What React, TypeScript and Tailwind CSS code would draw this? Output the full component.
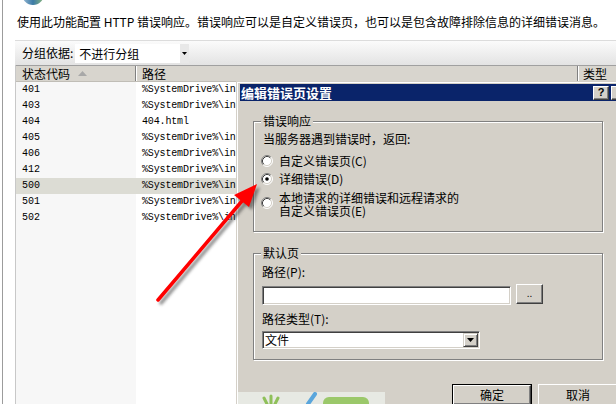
import React from 'react';

// only the part of each path left of the dialog is visible in the window
const sys = '%SystemDrive%\\in';
const rows = [
  { code: '401', path: sys },
  { code: '403', path: sys },
  { code: '404', path: '404.html' },
  { code: '405', path: sys },
  { code: '406', path: sys },
  { code: '412', path: sys },
  { code: '500', path: sys, selected: true },
  { code: '501', path: sys },
  { code: '502', path: sys },
];

const Radio = ({ checked }: { checked?: boolean }) => (
  <svg width="12" height="12" viewBox="0 0 12 12" className="shrink-0">
    <circle cx="6" cy="6" r="5" fill="#fff" />
    <path d="M2.11 9.89 A5.5 5.5 0 0 1 9.89 2.11" fill="none" stroke="#808080" />
    <path d="M9.89 2.11 A5.5 5.5 0 0 1 2.11 9.89" fill="none" stroke="#fff" />
    <path d="M2.82 9.18 A4.5 4.5 0 0 1 9.18 2.82" fill="none" stroke="#404040" />
    <path d="M9.18 2.82 A4.5 4.5 0 0 1 2.82 9.18" fill="none" stroke="#d4d0c8" />
    {checked && <circle cx="6" cy="6" r="1.8" fill="#000" />}
  </svg>
);

// small raised button with a black down triangle
const DropArrow = ({ className = '' }: { className?: string }) => (
  <div
    className={`flex items-center justify-center bg-[#d4d0c8] border border-t-[#d4d0c8] border-l-[#d4d0c8] border-b-[#404040] border-r-[#404040] shadow-[inset_1px_1px_0_#fff,inset_-1px_-1px_0_#808080] ${className}`}
  >
    <svg width="7" height="4" viewBox="0 0 7 4">
      <path d="M0 0h7L3.5 4z" fill="#000" />
    </svg>
  </div>
);

const GroupBox = ({ label, className = '', children }: { label: string; className?: string; children: React.ReactNode }) => (
  <div className={`relative border border-[#808080] shadow-[inset_1px_1px_0_#fff,1px_1px_0_#fff] ${className}`}>
    <span className="absolute -top-[7px] left-[7px] bg-[#d4d0c8] px-[2px] leading-[12px]">{label}</span>
    {children}
  </div>
);

export default function App() {
  return (
    <div className="relative w-[616px] h-[404px] overflow-hidden bg-white text-[12px] leading-none text-black font-['Noto_Sans_CJK_SC','Noto_Sans',sans-serif]">
      <div className="flex h-full">
        <div className="w-[2px]" />
        <div className="w-[1px] bg-[#9c9c9c]" />

        <div className="flex-1 flex flex-col min-w-0">
          {/* cut off feature icon */}
          <div className="h-[15px] pl-[19px] overflow-hidden">
            <svg width="22" height="8" viewBox="0 0 22 8">
              <defs>
                <linearGradient id="globe" x1="0" y1="0" x2="1" y2="0">
                  <stop offset="0" stopColor="#9dbdd6" />
                  <stop offset="0.5" stopColor="#3b7aa6" />
                  <stop offset="1" stopColor="#8cb97a" />
                </linearGradient>
              </defs>
              <ellipse cx="11" cy="-6" rx="11" ry="11" fill="url(#globe)" />
            </svg>
          </div>

          <p className="pl-[14px] h-[14px] leading-[14px] whitespace-nowrap">
            使用此功能配置 HTTP 错误响应。错误响应可以是自定义错误页，也可以是包含故障排除信息的详细错误消息。
          </p>

          {/* group by toolbar */}
          <div className="mt-[11px] ml-[12px] h-[25px] flex items-center bg-linear-to-b from-[#fbfbfb] to-[#e3e3e3] border-t border-[#dcdcdc] pl-[7px]">
            <span className="leading-[12px]">分组依据:</span>
            <div className="ml-[2px] flex items-stretch h-[19px] bg-white">
              <span className="w-[105px] pl-[4px] leading-[19px]">不进行分组</span>
              <div className="w-[9px] bg-[#e8e8e8] flex items-center justify-center">
                <svg width="5" height="3" viewBox="0 0 5 3">
                  <path d="M0 0h5L2.5 3z" fill="#000" />
                </svg>
              </div>
            </div>
          </div>

          {/* list */}
          <div className="ml-[12px] flex-1 flex flex-col border-l border-[#c8c8c8]">
            <div className="h-[17px] flex bg-[#d8d5ce] border-t border-[#a0a0a0] border-b border-b-[#c0bdb6]">
              <div className="w-[120px] flex items-center pl-[6px] border-r border-[#808080] shadow-[1px_0_0_#fff]">
                <span className="leading-[12px]">状态代码</span>
                <svg width="9" height="5" viewBox="0 0 9 5" className="ml-[8px]">
                  <path d="M0 5h9L4.5 0z" fill="#a8a8a8" />
                </svg>
              </div>
              <div className="w-[442px] flex items-center pl-[6px] border-r border-[#808080] shadow-[1px_0_0_#fff]">
                <span className="leading-[12px]">路径</span>
              </div>
              <div className="flex-1 flex items-center pl-[5px]">
                <span className="leading-[12px]">类型</span>
              </div>
            </div>

            <div className="flex-1 flex flex-col font-['Liberation_Mono',monospace] text-[10px]">
              {rows.map((r) => (
                <div key={r.code} className={`h-[16px] flex items-center ${r.selected ? 'bg-[#dcdcd4]' : ''}`}>
                  <div className={`w-[120px] h-full flex items-center pl-[6px] ${r.selected ? '' : 'bg-[#f7f7f7]'}`}>{r.code}</div>
                  <div className="pl-[6px] whitespace-nowrap tracking-[-0.15px]">{r.path}</div>
                </div>
              ))}
              <div className="flex-1 w-[120px] bg-[#f7f7f7]" />
            </div>
          </div>
        </div>
      </div>

      {/* edit error page dialog */}
      <div className="absolute left-[236px] top-[81px] w-[400px] h-[340px] border-l border-t border-[#d4d0c8]">
        <div className="h-full bg-[#d4d0c8] border-l border-t border-white flex flex-col">
          <div className="ml-[2px] mt-[1px] h-[17px] w-[390px] bg-[#0a246a] flex items-center justify-between pl-[1px] pr-[3px]">
            <span className="text-white font-bold text-[13px] leading-[15px]">编辑错误页设置</span>
            <div className="flex gap-[2px]">
              <div className="w-[16px] h-[14px] bg-[#d4d0c8] flex items-center justify-center border border-t-white border-l-white border-b-[#404040] border-r-[#404040] shadow-[inset_-1px_-1px_0_#808080]">
                <span className="font-['Liberation_Sans',sans-serif] font-bold text-[11px] leading-[11px]">?</span>
              </div>
              <div className="w-[16px] h-[14px] bg-[#d4d0c8] border border-t-white border-l-white border-b-[#404040] border-r-[#404040] shadow-[inset_-1px_-1px_0_#808080]" />
            </div>
          </div>

          <div className="pl-[15px] flex flex-col">
            <GroupBox label="错误响应" className="mt-[20px] w-[350px] h-[111px] pt-[11px] pl-[7px]">
              <p className="ml-[2px] leading-[12px]">当服务器遇到错误时，返回:</p>
              <label className="mt-[10px] h-[12px] flex items-center gap-[6px]">
                <Radio />
                <span className="leading-[12px]">自定义错误页(C)</span>
              </label>
              <label className="mt-[6px] h-[12px] flex items-center gap-[6px]">
                <Radio checked />
                <span className="leading-[12px]">详细错误(D)</span>
              </label>
              <label className="mt-[6px] flex items-start gap-[6px]">
                <div className="mt-[6px]">
                  <Radio />
                </div>
                <span className="leading-[13px]">
                  本地请求的详细错误和远程请求的
                  <br />
                  自定义错误页(E)
                </span>
              </label>
            </GroupBox>

            <GroupBox label="默认页" className="mt-[21px] w-[350px] h-[107px] pt-[12px] pl-[8px]">
              <p className="leading-[12px]">路径(P):</p>
              <div className="mt-[6px] flex items-start">
                <div className="mt-[2px] w-[249px] h-[19px] bg-white border border-t-[#808080] border-l-[#808080] border-b-white border-r-white shadow-[inset_1px_1px_0_#404040,inset_-1px_-1px_0_#d4d0c8]" />
                <button className="ml-[5px] w-[27px] h-[20px] bg-[#d4d0c8] flex items-center justify-center border border-t-white border-l-white border-b-[#404040] border-r-[#404040] shadow-[inset_-1px_-1px_0_#808080] text-[10px] leading-[10px] font-['Liberation_Sans',sans-serif]">
                  ..
                </button>
              </div>
              <p className="mt-[8px] leading-[12px]">路径类型(T):</p>
              <div className="mt-[6px] w-[218px] h-[18px] flex bg-white border border-t-[#808080] border-l-[#808080] border-b-white border-r-white shadow-[inset_1px_1px_0_#404040,inset_-1px_-1px_0_#d4d0c8] p-[1px]">
                <span className="flex-1 pl-[1px] leading-[14px]">文件</span>
                <DropArrow className="w-[15px] h-[14px]" />
              </div>
            </GroupBox>

            <div className="mt-[24px] w-[365px] flex justify-end gap-[6px]">
              <div className="w-[80px] h-[22px] border border-black">
                <button className="w-full h-full bg-[#d4d0c8] border border-t-white border-l-white border-b-[#404040] border-r-[#404040] shadow-[inset_-1px_-1px_0_#808080] leading-[12px]">
                  确定
                </button>
              </div>
              <button className="w-[80px] h-[22px] bg-[#d4d0c8] border border-t-white border-l-white border-b-[#404040] border-r-[#404040] shadow-[inset_-1px_-1px_0_#808080] leading-[12px]">
                取消
              </button>
            </div>
          </div>
        </div>
      </div>

      {/* watermark strip */}
      <div className="absolute left-[238px] top-[392px] w-[147px] h-[12px] bg-[#e7e9e3]">
        <svg width="147" height="12" viewBox="0 0 147 12">
          <path d="M29 12l-3-6M33 12V4M37 12l3-6" stroke="#8fc05a" strokeWidth="3" strokeLinecap="round" />
          <path d="M70 12l7-10" stroke="#5aa6dc" strokeWidth="4" strokeLinecap="round" />
          <rect x="85" y="5" width="46" height="12" rx="6" fill="#9bc86a" />
        </svg>
      </div>

      {/* red annotation arrow */}
      <svg className="absolute inset-0 pointer-events-none" width="616" height="404" viewBox="0 0 616 404">
        <defs>
          <filter id="blur" x="-20%" y="-20%" width="140%" height="140%">
            <feGaussianBlur stdDeviation="1.6" />
          </filter>
        </defs>
        <g transform="translate(3 3)" filter="url(#blur)" opacity="0.55">
          <line x1="158" y1="300" x2="242" y2="201" stroke="#333" strokeWidth="3.5" strokeLinecap="round" />
          <path d="M257 184L249 207L234 195Z" fill="#333" />
        </g>
        <line x1="158" y1="300" x2="242" y2="201" stroke="#ff0000" strokeWidth="3.5" strokeLinecap="round" />
        <path d="M257 184L249 207L234 195Z" fill="#ff0000" />
      </svg>
    </div>
  );
}
